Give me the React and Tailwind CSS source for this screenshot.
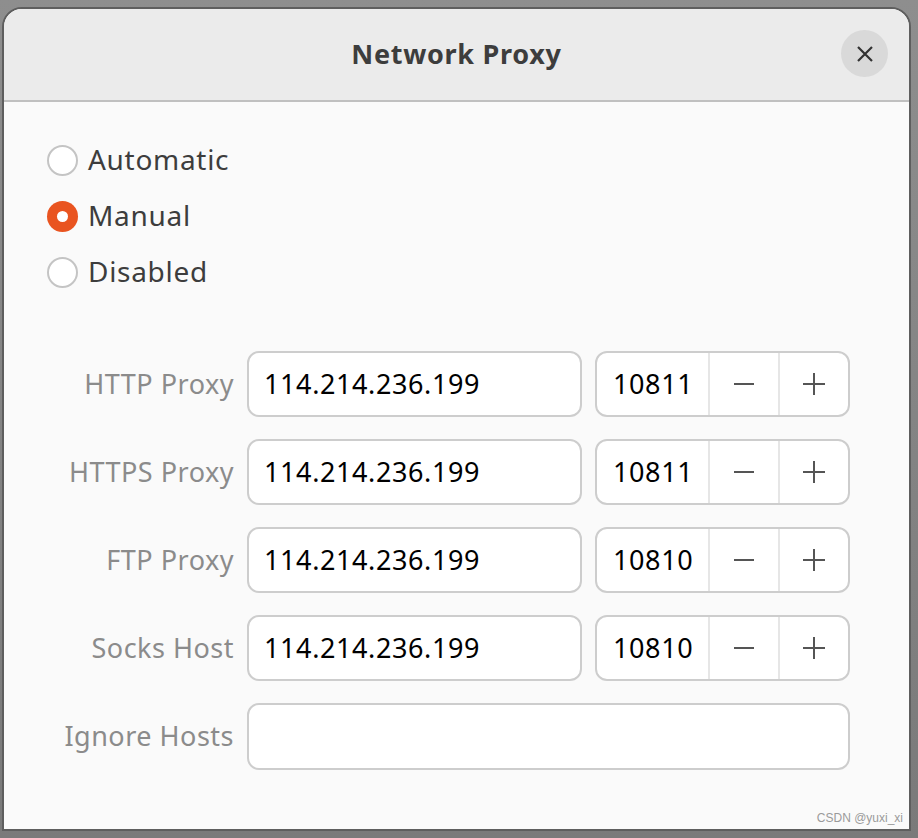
import React, { useState } from 'react';

const rows = [
  { label: 'HTTP Proxy', host: '114.214.236.199', port: 10811 },
  { label: 'HTTPS Proxy', host: '114.214.236.199', port: 10811 },
  { label: 'FTP Proxy', host: '114.214.236.199', port: 10810 },
  { label: 'Socks Host', host: '114.214.236.199', port: 10810 },
];

function Radio({ checked, label, onClick }) {
  return (
    <button onClick={onClick} className="flex items-center h-[56px] gap-[10px] text-left">
      {checked ? (
        <span className="w-[31px] h-[31px] rounded-full bg-[#e95420] flex items-center justify-center">
          <span className="w-[11px] h-[11px] rounded-full bg-white" />
        </span>
      ) : (
        <span className="w-[31px] h-[31px] rounded-full border-2 border-[#c4c4c4] bg-white" />
      )}
      <span className="text-[28px] tracking-[0.7px] leading-[38px] -mt-[2px] text-[#3d3d3d]">{label}</span>
    </button>
  );
}

function SpinBox({ value }) {
  return (
    <div className="flex h-[66px] w-[255px] rounded-[12px] border-2 border-[#cdcdcd] bg-white overflow-hidden">
      <div className="flex-1 flex items-center pl-[16px] text-[27px] tracking-[0.6px] text-black">{value}</div>
      <div className="w-[70px] flex items-center justify-center border-l-2 border-[#e6e6e6]">
        <span className="block w-[20px] h-[2px] bg-[#555]" />
      </div>
      <div className="w-[70px] flex items-center justify-center border-l-2 border-[#e6e6e6]">
        <svg width="22" height="22" viewBox="0 0 22 22">
          <path d="M11 0v22M0 11h22" stroke="#555" strokeWidth="2" />
        </svg>
      </div>
    </div>
  );
}

export default function App() {
  const [mode, setMode] = useState('manual');

  return (
    <div
      className="w-[918px] h-[838px] bg-gradient-to-b from-[#8e8e8e] to-[#7a7a7a] pt-[7px] pl-[2px] overflow-hidden"
      style={{ fontFamily: '"Noto Sans", "Open Sans", sans-serif' }}
    >
      <div className="w-[909px] h-[824px] rounded-t-[20px] border-2 border-[#5e5e5e] bg-[#fafafa] overflow-hidden flex flex-col relative">
        {/* header */}
        <div className="h-[93px] bg-[#ebebeb] border-b-2 border-[#c0c0c0] flex items-center justify-center relative shrink-0">
          <h1 className="text-[27px] font-bold text-[#3d3d3d] tracking-[0.7px]">Network Proxy</h1>
          <button className="absolute right-[21px] top-[21px] w-[47px] h-[47px] rounded-full bg-[#d9d9d9] flex items-center justify-center">
            <svg width="18" height="18" viewBox="0 0 18 18">
              <path d="M2 2l14 14M16 2L2 16" stroke="#333" strokeWidth="2.2" />
            </svg>
          </button>
        </div>

        {/* body */}
        <div className="flex-1 pl-[43px] pr-[58px] pt-[30px]">
          <div className="flex flex-col items-start">
            <Radio checked={mode === 'auto'} label="Automatic" onClick={() => setMode('auto')} />
            <Radio checked={mode === 'manual'} label="Manual" onClick={() => setMode('manual')} />
            <Radio checked={mode === 'off'} label="Disabled" onClick={() => setMode('off')} />
          </div>

          <div className="mt-[51px] flex flex-col gap-[22px]">
            {rows.map((r) => (
              <div key={r.label} className="flex items-center gap-[13px]">
                <div className="w-[187px] text-right text-[27px] text-[#8b8b8b] tracking-[0.5px] whitespace-nowrap">{r.label}</div>
                <div className="w-[335px] h-[66px] rounded-[12px] border-2 border-[#cdcdcd] bg-white flex items-center pl-[15px] text-[27px] tracking-[0.6px] text-black">
                  {r.host}
                </div>
                <SpinBox value={r.port} />
              </div>
            ))}
            <div className="flex items-center gap-[13px]">
              <div className="w-[187px] text-right text-[27px] text-[#8b8b8b] tracking-[0.5px] whitespace-nowrap">Ignore Hosts</div>
              <div className="w-[603px] h-[67px] rounded-[12px] border-2 border-[#cdcdcd] bg-white" />
            </div>
          </div>
        </div>

        <div className="absolute right-[6px] bottom-[2px] text-[12px] text-[#9a9a9a]" style={{ fontFamily: '"Liberation Sans", sans-serif' }}>
          CSDN @yuxi_xi
        </div>
      </div>
    </div>
  );
}
